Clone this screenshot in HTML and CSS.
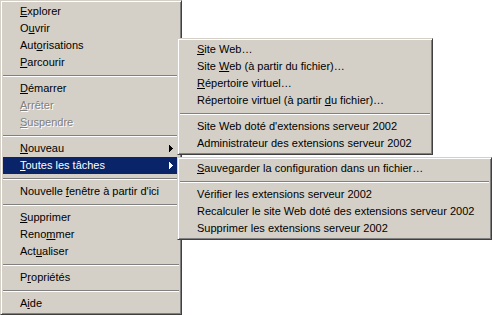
FILE: index.html
```html
<!DOCTYPE html>
<html lang="fr">
<head>
    <meta charset="UTF-8">
    <title>Menu contextuel</title>
    <link rel="stylesheet" href="styles.css">
</head>
<body>
    <div class="menu main">
        <div class="item"><span><u>E</u>xplorer</span></div>
        <div class="item"><span>O<u>u</u>vrir</span></div>
        <div class="item"><span>Aut<u>o</u>risations</span></div>
        <div class="item"><span><u>P</u>arcourir</span></div>
        <div class="sep"></div>
        <div class="item"><span><u>D</u>émarrer</span></div>
        <div class="item off"><span><u>A</u>rrêter</span></div>
        <div class="item off"><span><u>S</u>uspendre</span></div>
        <div class="sep"></div>
        <div class="item"><span><u>N</u>ouveau</span><svg class="arrow" width="4" height="7"><polygon points="0,0 4,3.5 0,7"/></svg></div>
        <div class="item active"><span><u>T</u>outes les tâches</span><svg class="arrow" width="4" height="7"><polygon points="0,0 4,3.5 0,7"/></svg></div>
        <div class="sep"></div>
        <div class="item"><span>Nouvelle <u>f</u>enêtre à partir d'ici</span></div>
        <div class="sep"></div>
        <div class="item"><span><u>S</u>upprimer</span></div>
        <div class="item"><span>Reno<u>m</u>mer</span></div>
        <div class="item"><span>Act<u>u</u>aliser</span></div>
        <div class="sep"></div>
        <div class="item"><span>P<u>r</u>opriétés</span></div>
        <div class="sep"></div>
        <div class="item"><span>A<u>i</u>de</span></div>
    </div>

    <div class="menu sub1">
        <div class="item"><span><u>S</u>ite Web…</span></div>
        <div class="item"><span>Site <u>W</u>eb (à partir du fichier)…</span></div>
        <div class="item"><span><u>R</u>épertoire virtuel…</span></div>
        <div class="item"><span>Répertoire virtuel (à partir <u>d</u>u fichier)…</span></div>
        <div class="sep"></div>
        <div class="item"><span>Site Web doté d'extensions serveur 2002</span></div>
        <div class="item"><span>Administrateur des extensions serveur 2002</span></div>
    </div>

    <div class="menu sub2">
        <div class="item"><span><u>S</u>auvegarder la configuration dans un fichier…</span></div>
        <div class="sep"></div>
        <div class="item"><span>Vérifier les extensions serveur 2002</span></div>
        <div class="item"><span>Recalculer le site Web doté des extensions serveur 2002</span></div>
        <div class="item"><span>Supprimer les extensions serveur 2002</span></div>
    </div>
</body>
</html>
```

FILE: styles.css
```css
html, body {
    margin: 0;
    padding: 0;
    background: #fff;
}
body {
    position: relative;
    width: 492px;
    height: 315px;
    overflow: hidden;
    font-family: "Liberation Sans", Arial, sans-serif;
    font-size: 11px;
    color: #000;
}

/* cadre 3D des menus */
.menu {
    box-sizing: border-box;
    background: #d4d0c8;
    border: 1px solid;
    border-color: #d4d0c8 #404040 #404040 #d4d0c8;
    box-shadow: inset 1px 1px #fff, inset -1px -1px #808080;
    padding: 2px;
}
.main {
    width: 182px;
}
.sub1 {
    position: absolute;
    left: 177px;
    top: 38px;
    width: 256px;
}
.sub2 {
    position: absolute;
    left: 177px;
    top: 157px;
    width: 315px;
}

.item {
    display: flex;
    align-items: center;
    justify-content: space-between;
    height: 17px;
    line-height: 17px;
    padding: 0 6px 0 17px;
    white-space: nowrap;
}
.item u {
    text-decoration: underline;
    text-underline-offset: 1px;
}
.item .arrow {
    fill: #000;
    shape-rendering: crispEdges;
}
.item.active {
    background: #0a246a;
    color: #fff;
}
.item.active .arrow {
    fill: #fff;
}
.item.off {
    color: #808080;
    text-shadow: 1px 1px 0 #fff;
}

.sep {
    margin: 4px 0 3px;
    border-top: 1px solid #808080;
    border-bottom: 1px solid #fff;
}
```
